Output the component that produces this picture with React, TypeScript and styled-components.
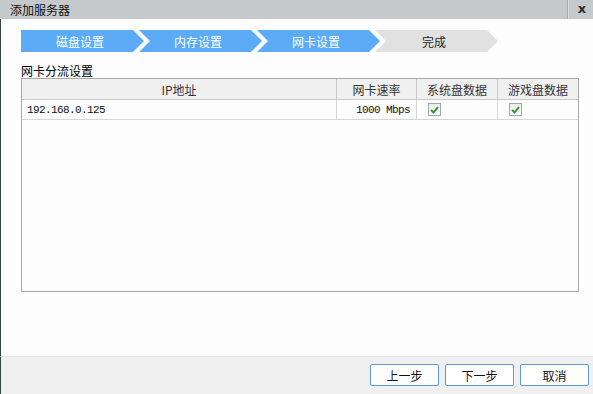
import React from "react";
import styled, { createGlobalStyle } from "styled-components";

const Global = createGlobalStyle`
  html, body { margin: 0; padding: 0; background: #ffffff; }
  body { font-family: "Noto Sans CJK SC", "Liberation Sans", sans-serif; font-size: 12px; color: #000; }
  * { box-sizing: border-box; }
`;

const Dialog = styled.div`
  width: 593px;
  height: 394px;
  display: flex;
  flex-direction: column;
  background: #fdfdfd;
`;

const TitleBar = styled.div`
  height: 19px;
  flex: none;
  display: flex;
  align-items: center;
  background: #c6c9cb;
  padding-left: 10px;
`;

const Title = styled.div`
  flex: 1;
  font-size: 12px;
  line-height: 19px;
  color: #111;
`;

const CloseBox = styled.div`
  width: 26px;
  height: 19px;
  display: flex;
  align-items: center;
  justify-content: center;
  padding-left: 3px;
  border-left: 1px solid #a9acae;
  box-shadow: inset 1px 0 0 #d8dadc;
  font-family: "DejaVu Sans", sans-serif;
  font-weight: bold;
  font-size: 13px;
  color: #2d2d2d;
  padding-bottom: 2px;
`;

const Body = styled.div`
  flex: 1;
  display: flex;
  flex-direction: column;
  border-left: 1px solid #3c4343;
  padding: 11px 14px 0 20px;
`;

const Steps = styled.div`
  display: flex;
  height: 22px;
`;

const Step = styled.div<{ $active: boolean; $first?: boolean }>`
  width: 123px;
  height: 22px;
  margin-right: -5px;
  padding-right: 5px;
  display: flex;
  align-items: center;
  justify-content: center;
  font-size: 12px;
  background: ${(p) => (p.$active ? "#5babf7" : "#e1e1e1")};
  color: ${(p) => (p.$active ? "#ffffff" : "#222222")};
  clip-path: ${(p) =>
    p.$first
      ? "polygon(0 0, 112px 0, 123px 50%, 112px 100%, 0 100%)"
      : "polygon(0 0, 112px 0, 123px 50%, 112px 100%, 0 100%, 11px 50%)"};
`;

const SectionLabel = styled.div`
  margin-top: 12px;
  height: 14px;
  line-height: 14px;
  font-size: 12px;
  color: #000;
`;

const Table = styled.div`
  width: 558px;
  height: 214px;
  border: 1px solid #a8a8a8;
  background: #fdfdfd;
`;

const Row = styled.div<{ $header?: boolean }>`
  display: grid;
  grid-template-columns: 315px 80px 81px 1fr;
  height: ${(p) => (p.$header ? "21px" : "20px")};
  background: ${(p) => (p.$header ? "#f0f0f0" : "transparent")};
  border-bottom: 1px solid ${(p) => (p.$header ? "#c9c9c9" : "#d6d6d6")};
`;

const HeadCell = styled.div`
  display: flex;
  align-items: center;
  justify-content: center;
  border-right: 1px solid #c9c9c9;
  font-size: 12px;
  color: #333;
  &:last-child { border-right: none; }
`;

const Cell = styled.div<{ $align?: "left" | "right" }>`
  display: flex;
  align-items: center;
  justify-content: ${(p) => (p.$align === "right" ? "flex-end" : "flex-start")};
  padding: 0 6px 0 ${(p) => (p.$align === "right" ? "6px" : "5px")};
  border-right: 1px solid #d6d6d6;
  font-family: "Liberation Mono", "DejaVu Sans Mono", monospace;
  font-size: 11px;
  letter-spacing: -0.6px;
  color: #111;
  &:last-child { border-right: none; }
`;

const CheckCell = styled.div`
  display: flex;
  align-items: center;
  padding-left: 11px;
  border-right: 1px solid #d6d6d6;
  &:last-child { border-right: none; }
`;

const CheckBox = styled.div`
  width: 13px;
  height: 13px;
  border: 1px solid #9aa8b6;
  background: linear-gradient(#ececec, #ffffff);
  display: flex;
  align-items: center;
  justify-content: center;
`;

const Footer = styled.div`
  height: 38px;
  flex: none;
  display: flex;
  align-items: center;
  justify-content: flex-end;
  gap: 6px;
  padding: 0 4px 1px 0;
  background: #f0f0f0;
  border-top: 1px solid #e6e6e6;
  border-left: 1px solid #3c4343;
`;

const Button = styled.button`
  width: 69px;
  height: 22px;
  border: 1px solid #5e9bd6;
  border-radius: 2px;
  background: #ffffff;
  font-family: "Noto Sans CJK SC", sans-serif;
  font-size: 12px;
  color: #111;
  padding: 0;
`;

const Check = () => (
  <svg width="9" height="8" viewBox="0 0 9 8">
    <path d="M1 4 L3.5 6.5 L8 1.2" fill="none" stroke="#2f9a2f" strokeWidth="2" />
  </svg>
);

const steps = [
  { label: "磁盘设置", active: true },
  { label: "内存设置", active: true },
  { label: "网卡设置", active: true },
  { label: "完成", active: false },
];

export default function App() {
  return (
    <>
      <Global />
      <Dialog>
        <TitleBar>
          <Title>添加服务器</Title>
          <CloseBox>x</CloseBox>
        </TitleBar>
        <Body>
          <Steps>
            {steps.map((s, i) => (
              <Step key={s.label} $active={s.active} $first={i === 0}>
                {s.label}
              </Step>
            ))}
          </Steps>
          <SectionLabel>网卡分流设置</SectionLabel>
          <Table>
            <Row $header>
              <HeadCell>IP地址</HeadCell>
              <HeadCell>网卡速率</HeadCell>
              <HeadCell>系统盘数据</HeadCell>
              <HeadCell>游戏盘数据</HeadCell>
            </Row>
            <Row>
              <Cell>192.168.0.125</Cell>
              <Cell $align="right">1000 Mbps</Cell>
              <CheckCell>
                <CheckBox>
                  <Check />
                </CheckBox>
              </CheckCell>
              <CheckCell>
                <CheckBox>
                  <Check />
                </CheckBox>
              </CheckCell>
            </Row>
          </Table>
        </Body>
        <Footer>
          <Button>上一步</Button>
          <Button>下一步</Button>
          <Button>取消</Button>
        </Footer>
      </Dialog>
    </>
  );
}
